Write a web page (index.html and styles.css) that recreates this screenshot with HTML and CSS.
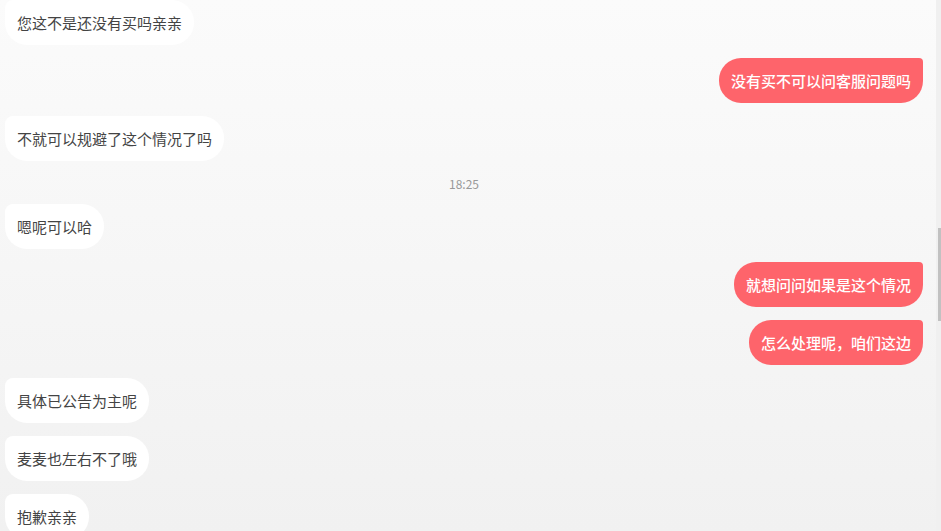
FILE: index.html
```html
<!DOCTYPE html>
<html lang="zh-CN">
<head>
    <meta charset="UTF-8">
    <meta name="viewport" content="width=device-width, initial-scale=1.0">
    <title>客服聊天记录</title>
    <link rel="stylesheet" href="styles.css">
</head>
<body>

    <div class="chat-page">
        <div class="chat-list">
            <div class="msg msg-left">您这不是还没有买吗亲亲</div>
            <div class="msg msg-right">没有买不可以问客服问题吗</div>
            <div class="msg msg-left">不就可以规避了这个情况了吗</div>
            <div class="msg-time">18:25</div>
            <div class="msg msg-left">嗯呢可以哈</div>
            <div class="msg msg-right">就想问问如果是这个情况</div>
            <div class="msg msg-right">怎么处理呢，咱们这边</div>
            <div class="msg msg-left">具体已公告为主呢</div>
            <div class="msg msg-left">麦麦也左右不了哦</div>
            <div class="msg msg-left">抱歉亲亲</div>
        </div>

        <!-- fake scrollbar, the list is scrolled halfway -->
        <div class="scroll-track">
            <div class="scroll-thumb"></div>
        </div>
    </div>

</body>
</html>
```

FILE: styles.css
```css
html,
body {
    margin: 0;
    height: 100%;
    overflow: hidden;
}

body {
    font-family: "Noto Sans CJK SC", "Noto Sans", sans-serif;
    background: linear-gradient(to bottom, #fbfbfb 0%, #f1f1f1 100%);
    color: #333;
}

.chat-page {
    display: flex;
    height: 100%;
}

.chat-list {
    flex: 1;
    display: flex;
    flex-direction: column;
    gap: 13px;
    padding: 0 13px 0 5px;
}

.msg {
    font-size: 15px;
    line-height: 21px;
    padding: 12px 12px;
    max-width: 70%;
}

.msg-left {
    align-self: flex-start;
    background-color: #fff;
    color: #444;
    border-radius: 8px 22px 22px 22px;
}

.msg-right {
    align-self: flex-end;
    background-color: #fe646b;
    color: #fff;
    font-weight: 500;
    border-radius: 22px 4px 22px 22px;
}

.msg-time {
    align-self: center;
    font-size: 12px;
    line-height: 17px;
    padding-top: 2px;
    margin: -1px 0;
    color: #999;
}

.scroll-track {
    width: 5px;
    background-color: #f0f0f0;
    display: flex;
    justify-content: flex-end;
}

.scroll-thumb {
    width: 3px;
    height: 93px;
    margin-top: 228px;
    background-color: #c1c1c1;
}
```
